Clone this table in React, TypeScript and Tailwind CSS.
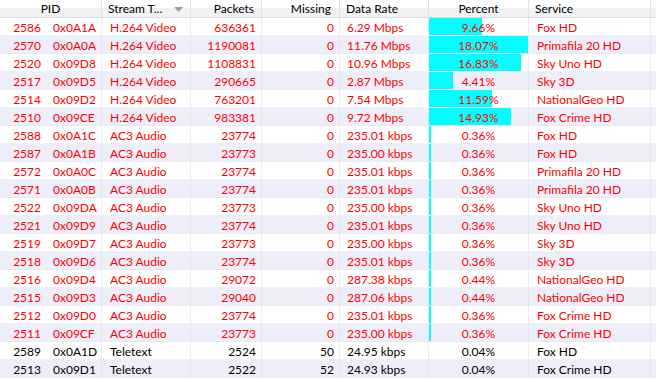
import React from "react";

type Row = [string, string, string, string, string, string, string, string];

const rows: Row[] = [
  ["2586", "0x0A1A", "H.264 Video", "636361", "0", "6.29 Mbps", "9.66%", "Fox HD"],
  ["2570", "0x0A0A", "H.264 Video", "1190081", "0", "11.76 Mbps", "18.07%", "Primafila 20 HD"],
  ["2520", "0x09D8", "H.264 Video", "1108831", "0", "10.96 Mbps", "16.83%", "Sky Uno HD"],
  ["2517", "0x09D5", "H.264 Video", "290665", "0", "2.87 Mbps", "4.41%", "Sky 3D"],
  ["2514", "0x09D2", "H.264 Video", "763201", "0", "7.54 Mbps", "11.59%", "NationalGeo HD"],
  ["2510", "0x09CE", "H.264 Video", "983381", "0", "9.72 Mbps", "14.93%", "Fox Crime HD"],
  ["2588", "0x0A1C", "AC3 Audio", "23774", "0", "235.01 kbps", "0.36%", "Fox HD"],
  ["2587", "0x0A1B", "AC3 Audio", "23773", "0", "235.00 kbps", "0.36%", "Fox HD"],
  ["2572", "0x0A0C", "AC3 Audio", "23774", "0", "235.01 kbps", "0.36%", "Primafila 20 HD"],
  ["2571", "0x0A0B", "AC3 Audio", "23774", "0", "235.01 kbps", "0.36%", "Primafila 20 HD"],
  ["2522", "0x09DA", "AC3 Audio", "23773", "0", "235.00 kbps", "0.36%", "Sky Uno HD"],
  ["2521", "0x09D9", "AC3 Audio", "23774", "0", "235.01 kbps", "0.36%", "Sky Uno HD"],
  ["2519", "0x09D7", "AC3 Audio", "23773", "0", "235.00 kbps", "0.36%", "Sky 3D"],
  ["2518", "0x09D6", "AC3 Audio", "23774", "0", "235.01 kbps", "0.36%", "Sky 3D"],
  ["2516", "0x09D4", "AC3 Audio", "29072", "0", "287.38 kbps", "0.44%", "NationalGeo HD"],
  ["2515", "0x09D3", "AC3 Audio", "29040", "0", "287.06 kbps", "0.44%", "NationalGeo HD"],
  ["2512", "0x09D0", "AC3 Audio", "23774", "0", "235.01 kbps", "0.36%", "Fox Crime HD"],
  ["2511", "0x09CF", "AC3 Audio", "23773", "0", "235.00 kbps", "0.36%", "Fox Crime HD"],
  ["2589", "0x0A1D", "Teletext", "2524", "50", "24.95 kbps", "0.04%", "Fox HD"],
  ["2513", "0x09D1", "Teletext", "2522", "52", "24.93 kbps", "0.04%", "Fox Crime HD"],
];

const cell = "h-[17px] shrink-0 border-r border-dotted border-[#dcdcdc] whitespace-nowrap";
const hcell = "h-[17px] shrink-0 pt-[1px] leading-[16px] border-r border-solid border-[#e2e3e5] whitespace-nowrap overflow-hidden";

export default function App() {
  return (
    <div
      className="w-[656px] h-[379px] bg-white overflow-hidden text-[12px]"
      style={{ fontFamily: 'Lato, "Noto Sans", sans-serif' }}
    >
      <div className="flex h-[18px] border-b border-[#d9dadc] bg-[linear-gradient(to_bottom,#ffffff_0%,#ffffff_45%,#f1f2f4_50%,#f1f2f4_100%)] text-black">
        <div className={`${hcell} w-[102px] text-center`}>PID</div>
        <div className={`${hcell} w-[89px] pl-[6px] flex items-center`}>
          <span>Stream T...</span>
          <svg className="ml-auto mr-[7px]" width="9" height="5" viewBox="0 0 9 5">
            <polygon points="0,0 9,0 4.5,5" fill="#9a9ea3" />
          </svg>
        </div>
        <div className={`${hcell} w-[71px] text-right pr-[7px]`}>Packets</div>
        <div className={`${hcell} w-[78px] text-right pr-[8px]`}>Missing</div>
        <div className={`${hcell} w-[89px] pl-[6px]`}>Data Rate</div>
        <div className={`${hcell} w-[100px] text-center`}>Percent</div>
        <div className={`${hcell} w-[122px] pl-[6px]`}>Service</div>
        <div className="flex-1" />
      </div>
      {rows.map((r, i) => {
        const pct = parseFloat(r[6]);
        const w = Math.round((pct / 18.07) * 99);
        const red = r[2] !== "Teletext";
        return (
          <div
            key={i}
            className={`flex h-[18px] border-b border-dotted border-[#e4e4ea] leading-[17px] ${i % 2 === 1 ? "bg-[#eeeefa]" : "bg-white"} ${red ? "text-[#ff0000]" : "text-black"}`}
          >
            <div className={`${cell} w-[102px] flex`}>
              <span className="w-[41px] text-right pt-[1px]">{r[0]}</span>
              <span className="ml-[12px] pt-[1px]">{r[1]}</span>
            </div>
            <div className={`${cell} w-[89px] pl-[8px]`}>
              <div className="pt-[1px]">{r[2]}</div>
            </div>
            <div className={`${cell} w-[71px] text-right pr-[5px]`}>
              <div className="pt-[1px]">{r[3]}</div>
            </div>
            <div className={`${cell} w-[78px] text-right pr-[5px]`}>
              <div className="pt-[1px]">{r[4]}</div>
            </div>
            <div className={`${cell} w-[89px] pl-[7px]`}>
              <div className="pt-[1px]">{r[5]}</div>
            </div>
            <div className={`${cell} w-[100px] relative text-center`}>
              {w > 0 && (
                <div className="absolute left-0 top-0 bottom-0 bg-[#00ffff]" style={{ width: `${w}px` }} />
              )}
              <div className="relative pt-[1px]">{r[6]}</div>
            </div>
            <div className={`${cell} w-[122px] pl-[8px]`}>
              <div className="pt-[1px]">{r[7]}</div>
            </div>
            <div className="flex-1" />
          </div>
        );
      })}
    </div>
  );
}
